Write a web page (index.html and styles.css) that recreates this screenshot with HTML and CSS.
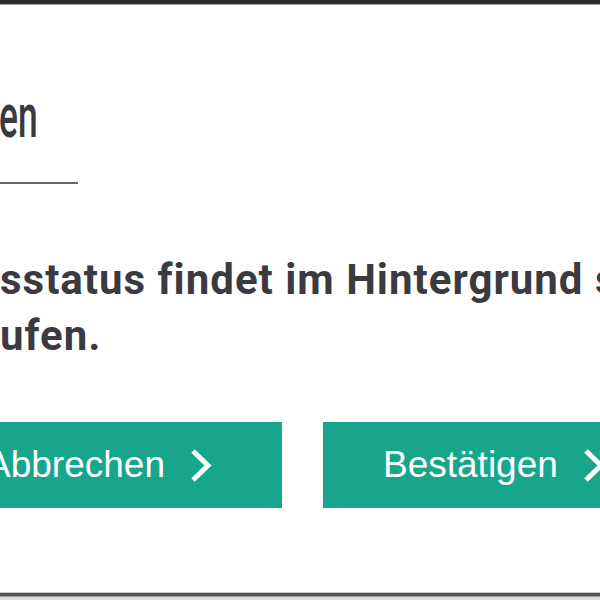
FILE: index.html
```html
<!DOCTYPE html>
<html lang="de">
<head>
<meta charset="utf-8">
<title>Dialog</title>
<link rel="stylesheet" href="styles.css">
</head>
<body>
<div class="frame">
  <div class="topbar"></div>
  <main class="dialog">
    <h1 class="title"><span class="title-text">en</span></h1>
    <div class="rule"></div>
    <p class="message">sstatus findet im Hintergrund statt<br>ufen.</p>
    <div class="actions">
      <button class="btn" type="button">
        <span class="label">Abbrechen</span>
        <svg class="chev" viewBox="0 0 22 35" width="22" height="35" aria-hidden="true"><polyline points="3,3 18,17.5 3,32" fill="none" stroke="#fff" stroke-width="5"/></svg>
      </button>
      <button class="btn" type="button">
        <span class="label">Bestätigen</span>
        <svg class="chev" viewBox="0 0 22 35" width="22" height="35" aria-hidden="true"><polyline points="3,3 18,17.5 3,32" fill="none" stroke="#fff" stroke-width="5"/></svg>
      </button>
    </div>
  </main>
  <div class="bottombar"></div>
</div>
</body>
</html>
```
FILE: styles.css
```css
html, body {
  margin: 0;
  padding: 0;
  background: #ffffff;
}
body {
  width: 600px;
  height: 600px;
  overflow: hidden;
}
.frame {
  display: flex;
  flex-direction: column;
  height: 600px;
}
.topbar {
  height: 4px;
  background: #2c2c2c;
  border-bottom: 1px solid #a8a8a8;
  flex: none;
}
.dialog {
  flex: 1;
  display: flex;
  flex-direction: column;
  align-items: flex-start;
}
.title {
  margin: 76px 0 0 -1px;
  height: 70px;
  font-family: Roboto, "Liberation Sans", sans-serif;
  font-weight: 500;
  font-size: 62px;
  line-height: 70px;
  color: #3a3a3e;
}
.title-text {
  display: inline-block;
  transform: scaleX(0.57);
  transform-origin: 0 0;
}
.rule {
  margin-top: 31px;
  width: 78px;
  height: 2px;
  background: #66666a;
}
.message {
  margin: 68px 0 0 0;
  font-family: Roboto, "Liberation Sans", sans-serif;
  font-weight: 700;
  font-size: 42px;
  letter-spacing: 1px;
  line-height: 56px;
  color: #3a3a40;
  white-space: nowrap;
}
.actions {
  margin: 58px 0 0 -74px;
  display: flex;
  gap: 41px;
}
.btn {
  width: 356px;
  height: 86px;
  flex: none;
  display: flex;
  align-items: center;
  gap: 25px;
  padding: 0 0 0 60px;
  border: 0;
  border-radius: 0;
  background: #17a68c;
  color: #ffffff;
  font-family: "Liberation Sans", Arial, sans-serif;
  font-size: 37px;
  line-height: 86px;
  box-sizing: border-box;
}
.label {
  white-space: nowrap;
}
.chev {
  flex: none;
  display: block;
}
.bottombar {
  flex: none;
  height: 8px;
  background: linear-gradient(#c8c8c8 0 1px, #555558 1px 4px, #9a9a9a 4px 5px, #dedede 5px 8px);
}
```
